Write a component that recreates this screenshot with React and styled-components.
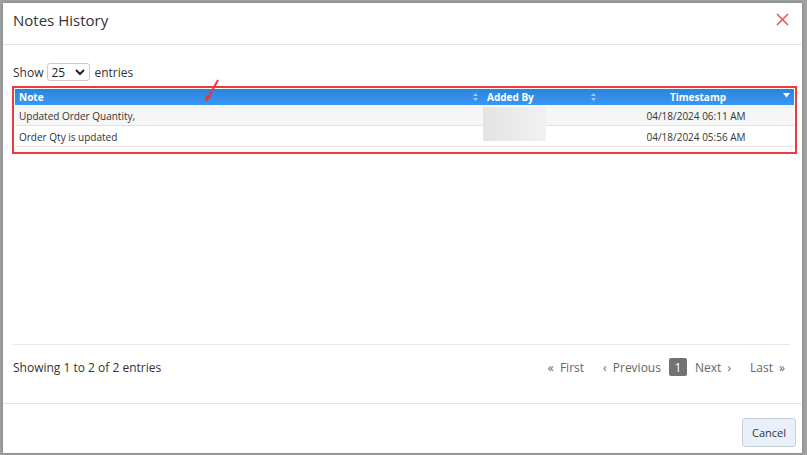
import styled, { createGlobalStyle } from 'styled-components';

const Global = createGlobalStyle`
  html, body { margin: 0; padding: 0; }
  body {
    background: #a3a3a3;
    font-family: "Open Sans", "Liberation Sans", sans-serif;
    width: 807px;
    height: 455px;
    overflow: hidden;
  }
`

const rows = [
  { note: 'Updated Order Quantity,', time: '04/18/2024 06:11 AM' },
  { note: 'Order Qty is updated', time: '04/18/2024 05:56 AM' },
]

const SortBoth = () => (
  <svg width="5" height="8" viewBox="0 0 5 8">
    <path d="M2.5 0 L5 3 L0 3 Z M2.5 8 L5 5 L0 5 Z" fill="#9fc8f3" />
  </svg>
)

const SortDown = () => (
  <svg width="7" height="5" viewBox="0 0 7 5">
    <path d="M0 0 L7 0 L3.5 4.5 Z" fill="#ffffff" />
  </svg>
)

const App = () => {
  return (
    <Frame>
      <Global />
      <Modal>
        <Header>
          <Title>Notes History</Title>
          <Close>
            <svg width="13" height="13" viewBox="0 0 13 13">
              <path d="M1 1 L12 12 M12 1 L1 12" stroke="#e8575a" strokeWidth="1.6" />
            </svg>
          </Close>
        </Header>
        <Body>
          <Length>
            Show
            <Select>
              25
              <svg width="10" height="7" viewBox="0 0 10 7">
                <path d="M1 1 L5 5 L9 1" stroke="#222" strokeWidth="2" fill="none" />
              </svg>
            </Select>
            entries
          </Length>
          <Highlight>
            <Arrow width="16" height="24" viewBox="0 0 16 24">
              <path d="M14 1 L4 19" stroke="#e8383b" strokeWidth="2" />
              <path d="M1 23 L2.5 15.5 L7.5 18 Z" fill="#e8383b" />
            </Arrow>
            <Table>
              <thead>
                <tr>
                  <Th $w="465px">
                    <HeadCell>Note<Icon $right="2px"><SortBoth /></Icon></HeadCell>
                  </Th>
                  <Th $w="118px">
                    <HeadCell $pad="7px">Added By<Icon $right="2px"><SortBoth /></Icon></HeadCell>
                  </Th>
                  <Th $center>
                    <HeadCell $center>Timestamp<Icon $right="4px"><SortDown /></Icon></HeadCell>
                  </Th>
                </tr>
              </thead>
              <tbody>
                {rows.map((r, i) => (
                  <Tr key={i} $odd={i % 2 === 0}>
                    <Td>{r.note}</Td>
                    <Td>{i === 0 && <Redacted />}</Td>
                    <Td $center>{r.time}</Td>
                  </Tr>
                ))}
              </tbody>
            </Table>
          </Highlight>
          <Spacer />
          <Footer>
            <Info>Showing 1 to 2 of 2 entries</Info>
            <Pager>
              <PageLink>« First</PageLink>
              <PageLink>‹ Previous</PageLink>
              <Current>1</Current>
              <PageLink>Next ›</PageLink>
              <PageLink>Last »</PageLink>
            </Pager>
          </Footer>
        </Body>
        <Actions>
          <Cancel>Cancel</Cancel>
        </Actions>
      </Modal>
    </Frame>
  )
}

export default App

const Frame = styled.div`
  box-sizing: border-box;
  width: 807px;
  height: 455px;
  padding: 3px 5px 2px 3px;
`

const Modal = styled.div`
  box-sizing: border-box;
  height: 100%;
  background: #fff;
  box-shadow: 0 0 4px rgba(0, 0, 0, 0.25);
  display: flex;
  flex-direction: column;
`

const Header = styled.div`
  height: 41px;
  border-bottom: 1px solid #e5e5e5;
  display: flex;
  align-items: center;
  justify-content: space-between;
  padding: 0 10px 0 10px;
`

const Title = styled.div`
  font-size: 15px;
  color: #333;
  margin-top: -7px;
`

const Close = styled.div`
  display: flex;
  margin-top: -9px;
  margin-right: 3px;
`

const Body = styled.div`
  flex: 1;
  display: flex;
  flex-direction: column;
  padding: 18px 6px 0 10px;
`

const Length = styled.div`
  display: flex;
  align-items: center;
  gap: 4px;
  font-size: 12px;
  color: #333;
  height: 18px;
`

const Select = styled.div`
  box-sizing: border-box;
  width: 43px;
  height: 18px;
  border: 1px solid #ccc;
  border-radius: 3px;
  display: flex;
  align-items: center;
  justify-content: space-between;
  padding: 0 4px 0 3px;
  font-size: 12px;
  color: #222;
`

const Highlight = styled.div`
  position: relative;
  margin: 5px 0 0 -1px;
  width: 785px;
  box-sizing: border-box;
  border: 2px solid #ec3a3e;
  padding: 1px 1px 5px 1px;
`

const Arrow = styled.svg`
  position: absolute;
  left: 190px;
  top: -9px;
`

const Table = styled.table`
  width: 100%;
  border-collapse: collapse;
  font-size: 10px;
`

const Th = styled.th`
  width: ${p => p.$w || 'auto'};
  height: 16px;
  padding: 0;
  background: linear-gradient(#2c83dc, #3898f5);
  color: #fff;
  font-weight: bold;
  text-align: ${p => (p.$center ? 'center' : 'left')};
`

const HeadCell = styled.div`
  position: relative;
  display: flex;
  align-items: center;
  justify-content: ${p => (p.$center ? 'center' : 'flex-start')};
  padding-left: ${p => p.$pad || '4px'};
  height: 16px;
`

const Icon = styled.span`
  position: absolute;
  right: ${p => p.$right};
  top: 4px;
  display: flex;
`

const Tr = styled.tr`
  background: ${p => (p.$odd ? '#f6f6f6' : '#fff')};
  border-bottom: 1px solid #e3e3e3;
`

const Td = styled.td`
  position: relative;
  height: 19px;
  padding: 1px 4px 0 4px;
  color: #333;
  text-align: ${p => (p.$center ? 'center' : 'left')};
  vertical-align: middle;
`

const Redacted = styled.div`
  position: absolute;
  left: 3px;
  top: 2px;
  width: 63px;
  height: 34px;
  background: linear-gradient(90deg, #e4e4e4, #f1f1f1);
`

const Spacer = styled.div`
  flex: 1;
`

const Footer = styled.div`
  box-sizing: border-box;
  border-top: 1px solid #e8e8e8;
  margin-right: 6px;
  height: 59px;
  display: flex;
  align-items: center;
  justify-content: space-between;
  padding-bottom: 14px;
`

const Info = styled.div`
  font-size: 12px;
  color: #333;
`

const Pager = styled.div`
  display: flex;
  align-items: center;
  gap: 19px;
  margin-right: 5px;
`

const PageLink = styled.span`
  font-size: 12px;
  color: #666;
  word-spacing: 3px;
`

const Current = styled.span`
  box-sizing: border-box;
  width: 18px;
  height: 18px;
  border-radius: 2px;
  background: #727272;
  color: #fff;
  font-size: 12px;
  display: flex;
  align-items: center;
  justify-content: center;
  margin: 0 -11px;
`

const Actions = styled.div`
  box-sizing: border-box;
  height: 50px;
  border-top: 1px solid #e5e5e5;
  display: flex;
  justify-content: flex-end;
  align-items: flex-start;
  padding: 14px 6px 0 0;
`

const Cancel = styled.button`
  box-sizing: border-box;
  width: 54px;
  height: 29px;
  background: #e8f1fa;
  border: 1px solid #c8cfd6;
  border-radius: 3px;
  font-family: "Open Sans", "Liberation Sans", sans-serif;
  font-size: 11px;
  color: #333;
  padding: 0;
`
